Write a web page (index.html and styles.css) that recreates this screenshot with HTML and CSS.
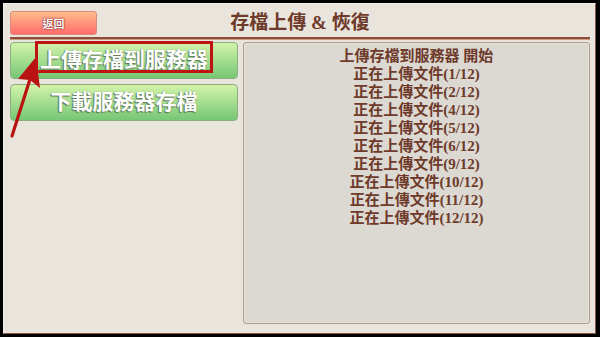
FILE: index.html
```html
<!DOCTYPE html>
<html lang="zh-Hant">
<head>
<meta charset="utf-8">
<link rel="stylesheet" href="styles.css">
</head>
<body>
<div class="frame">
  <div class="header">
    <button class="back">返回</button>
    <div class="title">存檔上傳 &amp; 恢復</div>
    <div class="spacer"></div>
  </div>
  <div class="rule"></div>
  <div class="main">
    <div class="side">
      <button class="gbtn">上傳存檔到服務器</button>
      <button class="gbtn">下載服務器存檔</button>
    </div>
    <div class="log">
      <div>上傳存檔到服務器 開始</div>
      <div>正在上傳文件(1/12)</div>
      <div>正在上傳文件(2/12)</div>
      <div>正在上傳文件(4/12)</div>
      <div>正在上傳文件(5/12)</div>
      <div>正在上傳文件(6/12)</div>
      <div>正在上傳文件(9/12)</div>
      <div>正在上傳文件(10/12)</div>
      <div>正在上傳文件(11/12)</div>
      <div>正在上傳文件(12/12)</div>
    </div>
  </div>
  <div class="highlight"></div>
  <svg class="arrow" width="60" height="150" viewBox="0 0 60 150">
    <line x1="12" y1="136" x2="31" y2="76" stroke="#b81212" stroke-width="3.2" stroke-linecap="round"/>
    <polygon points="36,57 40,88 30,80 18,79" fill="#b81212"/>
  </svg>
</div>
</body>
</html>
```
FILE: styles.css
```css
html, body {
  margin: 0;
  padding: 0;
  background: #000;
  width: 600px;
  height: 337px;
  overflow: hidden;
}
body {
  font-family: "Liberation Serif", "Noto Sans CJK TC", serif;
}
.frame {
  position: relative;
  box-sizing: border-box;
  margin: 3px 4px 0 3px;
  width: 593px;
  height: 331px;
  background: #e9e5dd;
  border: 1px solid #f3efe8;
  border-right-color: #8a5644;
  border-bottom-color: #8a5644;
  padding: 7px 5px 9px 6px;
  display: flex;
  flex-direction: column;
}
.header {
  display: grid;
  grid-template-columns: 87px 1fr 87px;
  align-items: center;
  height: 24px;
}
.back {
  box-sizing: border-box;
  height: 24px;
  width: 87px;
  padding: 0;
  border: 1px solid #d88c7a;
  border-radius: 3px;
  background: linear-gradient(#ffbd8c, #ff6c6c);
  color: #fff;
  font-family: "Liberation Serif", "Noto Sans CJK TC", serif;
  font-size: 11px;
  font-weight: bold;
  text-shadow: 0 0 2px #7a1e1e, 0 0 1px #7a1e1e;
}
.title {
  text-align: center;
  color: #6e3a2a;
  font-size: 19px;
  font-weight: bold;
  line-height: 24px;
}
.rule {
  margin-top: 2px;
  height: 2px;
  background: #8e4e36;
  border-bottom: 1px solid #c89a88;
}
.main {
  margin-top: 2px;
  flex: 1;
  display: flex;
  gap: 5px;
}
.side {
  width: 228px;
  display: flex;
  flex-direction: column;
  gap: 5px;
}
.gbtn {
  box-sizing: border-box;
  height: 37px;
  width: 228px;
  padding: 0;
  border: 1px solid #8caf80;
  border-radius: 4px;
  background: linear-gradient(#d2f3aa, #76c775);
  color: #fff;
  font-family: "Liberation Serif", "Noto Sans CJK TC", serif;
  font-size: 21px;
  font-weight: bold;
  line-height: 35px;
  text-shadow: -1px 1px 1px #5f7556, 0 0 1px #6d8562;
}
.log {
  flex: 1;
  box-sizing: border-box;
  background: #dcd8d2;
  border: 1px solid #ad9d92;
  border-radius: 3px;
  box-shadow: inset 0 0 0 1px #e6e2dc;
  color: #6e3a2a;
  font-size: 15px;
  font-weight: bold;
  line-height: 18px;
  text-align: center;
  padding-top: 4px;
}
.highlight {
  position: absolute;
  left: 31px;
  top: 37px;
  width: 178px;
  height: 32px;
  box-sizing: border-box;
  border: 3px solid #c01414;
}
.arrow {
  position: absolute;
  left: -4px;
  top: -4px;
}
```
